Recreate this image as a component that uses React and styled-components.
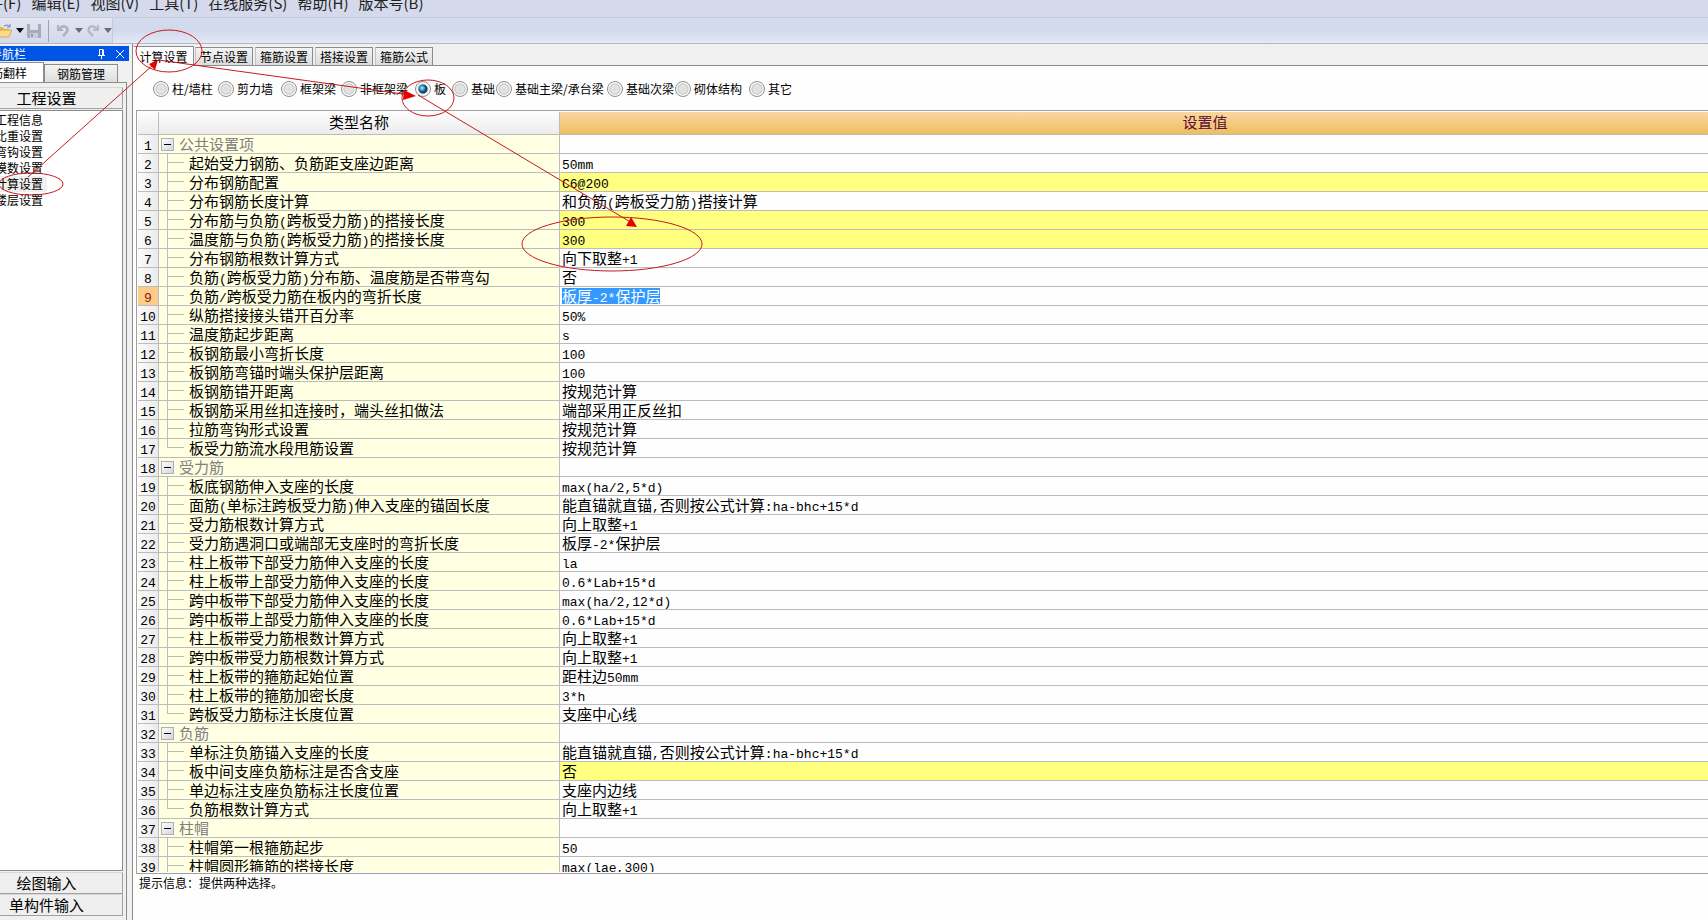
import React, { useState } from "react";
import styled, { createGlobalStyle } from "styled-components";

const GlobalStyle = createGlobalStyle`
* {
  box-sizing: border-box;
}
body {
  margin: 0;
  overflow: hidden;
  background: #fefefe;
  color: #000;
  font-family: 'Noto Sans CJK SC', sans-serif;
  font-size: 12px;
}
button, input {
  margin: 0;
  padding: 0;
  border: none;
  background: none;
  color: inherit;
  font: inherit;
}
`

/* the window hangs over the top left corner of the screen */
const Window = styled.div`
display: flex;
flex-direction: column;
height: calc(100vh + 8px);
margin: -8px 0 0 -36px;
white-space: nowrap;
`

const MenuBar = styled.nav`
display: flex;
align-items: center;
gap: 10px;
height: 26px;
padding: 0 0 4px 9px;
border-bottom: 1px solid #c9ccd6;
background: #d4d9eb;
`
const MenuItem = styled.button`
font-size: 15px;
line-height: 20px;
color: #222;
`

const ToolBar = styled.div`
height: 26px;
flex: none;
border-bottom: 1px solid #adb9c8;
background: linear-gradient(#d3dbf0, #d1daec 50%, #e4e8f6);
`
const ToolGroup = styled.div`
display: flex;
align-items: center;
width: 149px;
height: 25px;
padding-left: 34px;
border-right: 1px solid #c4cbdc;
background: linear-gradient(#e3e6f3, #d3d9e9);
`
const ToolButton = styled.button`
display: flex;
width: ${props => props.$width}px;
`
const Divider = styled.span`
width: 1px;
height: 22px;
margin: 0 7px;
background: #9aa3b8;
`

const Body = styled.div`
display: flex;
flex: 1;
min-height: 0;
background: #f0f0f0;
`

const SideBar = styled.aside`
display: flex;
flex-direction: column;
width: 165px;
padding-top: 2px;
`
const Caption = styled.div`
display: flex;
align-items: center;
gap: 10px;
height: 15px;
padding: 0 5px 0 2px;
background: #0054e3;
color: #fff;
line-height: 15px;
`
const CaptionText = styled.span`
flex: 1;
`
const SideTabs = styled.div`
display: flex;
align-items: flex-end;
height: 21px;
`
const SideTab = styled.button`
width: ${props => props.$active ? 80 : 74}px;
height: ${props => props.$active ? 20 : 18}px;
padding-right: ${props => props.$active ? 2 : 0}px;
border: 1px solid #8c8c8c;
border-bottom: none;
background: ${props => props.$active ? '#fff' : 'linear-gradient(#f4f4f4, #dedede)'};
line-height: 17px;
`
const SidePanel = styled.div`
display: flex;
flex-direction: column;
flex: 1;
width: 163px;
padding: 4px 3px 4px 5px;
border: 1px solid #8c8c8c;
border-bottom: none;
background: #f0f0f0;
`
const PanelHeader = styled.button`
height: 22px;
flex: none;
border: 1px solid #a0a0a0;
border-top-color: #d8d8d8;
background: #efefef;
font-size: 15px;
line-height: 20px;
`
const NavList = styled.div`
display: flex;
flex-direction: column;
align-items: flex-start;
flex: 1;
margin: 1px 0;
padding: 1px 0 0 20px;
border: 1px solid #8c8c8c;
background: #fff;
`
const NavItem = styled.button`
height: 16px;
padding: 0 4px;
border-radius: 2px;
background: ${props => props.$active ? '#efefef' : 'none'};
line-height: 16px;
`

const Main = styled.main`
display: flex;
flex-direction: column;
flex: 1;
min-width: 0;
margin-left: 3px;
border-left: 1px solid #8c8c8c;
background: #fefefe;
`
const Tabs = styled.div`
display: flex;
align-items: flex-end;
height: 22px;
flex: none;
border-bottom: 1px solid #8b8b93;
background: #f0f0f0;
`
const Tab = styled.button`
width: ${props => props.$active ? 61 : 58}px;
height: ${props => props.$active ? 20 : 18}px;
margin-right: ${props => props.$active ? 1 : 2}px;
margin-bottom: ${props => props.$active ? -1 : 0}px;
border: 1px solid #8b8b93;
border-bottom: none;
border-left-color: ${props => props.$active ? '#fefefe' : '#c4c4c8'};
background: ${props => props.$active ? '#fefefe' : 'linear-gradient(#f4f4f4, #dcdcdc)'};
line-height: 16px;
`

const Types = styled.div`
display: grid;
grid-template-columns: 65px 63px 60px 74px 37px 44px 111px 68px 74px auto;
align-items: center;
height: 44px;
flex: none;
padding: 1px 0 0 20px;
`
const TypeLabel = styled.label`
display: flex;
align-items: center;
gap: 3px;
line-height: 16px;
`
const Radio = styled.input`
appearance: none;
width: 16px;
height: 16px;
border: 1px solid #8e8f8f;
border-radius: 50%;
background: radial-gradient(circle, #dcdcdc 0, #e6e6e6 4px, #c4c4c4 5px, #f8f8f8 6px);

&:checked {
  background: radial-gradient(circle at 6px 6px, #c4f1ff 0, #3fa4d4 2px, transparent 4px), radial-gradient(circle, #145a88 2px, #0b3658 4px, #dfe3e6 5px, #f8f8f8 6px);
}
`

const GridFrame = styled.div`
flex: 1;
min-height: 0;
margin-left: 3px;
padding: 1px 0 1px 1px;
border: 1px solid #a0a0a0;
border-right: none;
`
const GridClip = styled.div`
height: 100%;
overflow: hidden;
`
/* the value column is wider than its view */
const Grid = styled.table`
width: calc(100% + 143px);
table-layout: fixed;
border-collapse: separate;
border-spacing: 0;
font-size: 15px;
line-height: 18px;
`
const HeadCell = styled.th`
width: ${props => props.$width};
height: 23px;
padding: 0 0 2px;
border-right: 1px solid #bcbcbc;
border-bottom: 1px solid #bcbcbc;
background: ${props => props.$active ? 'linear-gradient(#f8d7a0, #f0be60)' : 'linear-gradient(#fdfdfd, #ececec)'};
color: ${props => props.$active ? '#5c0f3c' : '#000'};
font-weight: 400;
`
const NumberCell = styled.th`
height: 19px;
padding: 0;
border-right: 1px solid #bcbcbc;
border-bottom: 1px solid #bcbcbc;
background: ${props => props.$active ? '#ffcc88' : 'linear-gradient(90deg, #fbfbfb, #ebebeb)'};
color: ${props => props.$active ? '#8b1a1a' : '#000'};
font-weight: 400;
`
const NameCell = styled.td`
height: 19px;
padding: 0;
border-right: 1px solid #bcbcbc;
border-bottom: 1px solid #bcbcbc;
background: #ffffe1;
`
const ValueCell = styled.td`
height: 19px;
padding: 0 0 0 2px;
border-bottom: 1px solid #bcbcbc;
background: ${props => props.$changed ? '#ffff80' : '#fefefe'};
`
const CellRow = styled.div`
display: flex;
align-items: center;
justify-content: ${props => props.$center ? 'center' : 'flex-start'};
height: 18px;
color: ${props => props.$group ? '#808080' : 'inherit'};
`
const Toggle = styled.button`
display: flex;
align-items: center;
justify-content: center;
width: 13px;
height: 13px;
margin: 0 5px 0 2px;
border: 1px solid #a9b0bb;
background: linear-gradient(135deg, #fff, #d4d4dc);
`
const Branch = styled.span`
display: grid;
grid-template-rows: 9px 9px;
width: 17px;
height: 18px;
margin: 0 5px 0 8px;

&::before {
  content: '';
  border-left: 1px solid #bcbcbc;
  border-bottom: 1px solid #bcbcbc;
}
&::after {
  content: '';
  border-left: 1px solid ${props => props.$last ? 'transparent' : '#bcbcbc'};
}
`
const Selection = styled.span`
height: 16px;
background: #3399ff;
color: #fff;
line-height: 16px;
`
/* half-width characters sit in an 8px cell beside the 15px Chinese ones */
const Latin = styled.span`
font-family: 'Liberation Mono', monospace;
font-size: 13px;
line-height: 12px;
`

const Hint = styled.footer`
height: 46px;
flex: none;
padding: 1px 0 0 6px;
line-height: 16px;
`

const Marks = styled.svg`
position: absolute;
top: 0;
left: 0;
pointer-events: none;
`

const menus = ['文件(F)', '编辑(E)', '视图(V)', '工具(T)', '在线服务(S)', '帮助(H)', '版本号(B)']

const navItems = ['工程信息', '比重设置', '弯钩设置', '模数设置', '计算设置', '楼层设置']

const tabs = ['计算设置', '节点设置', '箍筋设置', '搭接设置', '箍筋公式']

const types = ['柱/墙柱', '剪力墙', '框架梁', '非框架梁', '板', '基础', '基础主梁/承台梁', '基础次梁', '砌体结构', '其它']

const settings = [
    { group: '公共设置项' },
    { name: '起始受力钢筋、负筋距支座边距离', value: '50mm' },
    { name: '分布钢筋配置', value: 'C6@200', changed: true },
    { name: '分布钢筋长度计算', value: '和负筋(跨板受力筋)搭接计算' },
    { name: '分布筋与负筋(跨板受力筋)的搭接长度', value: '300', changed: true },
    { name: '温度筋与负筋(跨板受力筋)的搭接长度', value: '300', changed: true },
    { name: '分布钢筋根数计算方式', value: '向下取整+1' },
    { name: '负筋(跨板受力筋)分布筋、温度筋是否带弯勾', value: '否' },
    { name: '负筋/跨板受力筋在板内的弯折长度', value: '板厚-2*保护层', selected: true },
    { name: '纵筋搭接接头错开百分率', value: '50%' },
    { name: '温度筋起步距离', value: 's' },
    { name: '板钢筋最小弯折长度', value: '100' },
    { name: '板钢筋弯锚时端头保护层距离', value: '100' },
    { name: '板钢筋错开距离', value: '按规范计算' },
    { name: '板钢筋采用丝扣连接时，端头丝扣做法', value: '端部采用正反丝扣' },
    { name: '拉筋弯钩形式设置', value: '按规范计算' },
    { name: '板受力筋流水段甩筋设置', value: '按规范计算' },
    { group: '受力筋' },
    { name: '板底钢筋伸入支座的长度', value: 'max(ha/2,5*d)' },
    { name: '面筋(单标注跨板受力筋)伸入支座的锚固长度', value: '能直锚就直锚,否则按公式计算:ha-bhc+15*d' },
    { name: '受力筋根数计算方式', value: '向上取整+1' },
    { name: '受力筋遇洞口或端部无支座时的弯折长度', value: '板厚-2*保护层' },
    { name: '柱上板带下部受力筋伸入支座的长度', value: 'la' },
    { name: '柱上板带上部受力筋伸入支座的长度', value: '0.6*Lab+15*d' },
    { name: '跨中板带下部受力筋伸入支座的长度', value: 'max(ha/2,12*d)' },
    { name: '跨中板带上部受力筋伸入支座的长度', value: '0.6*Lab+15*d' },
    { name: '柱上板带受力筋根数计算方式', value: '向上取整+1' },
    { name: '跨中板带受力筋根数计算方式', value: '向上取整+1' },
    { name: '柱上板带的箍筋起始位置', value: '距柱边50mm' },
    { name: '柱上板带的箍筋加密长度', value: '3*h' },
    { name: '跨板受力筋标注长度位置', value: '支座中心线' },
    { group: '负筋' },
    { name: '单标注负筋锚入支座的长度', value: '能直锚就直锚,否则按公式计算:ha-bhc+15*d' },
    { name: '板中间支座负筋标注是否含支座', value: '否', changed: true },
    { name: '单边标注支座负筋标注长度位置', value: '支座内边线' },
    { name: '负筋根数计算方式', value: '向上取整+1' },
    { group: '柱帽' },
    { name: '柱帽第一根箍筋起步', value: '50' },
    { name: '柱帽圆形箍筋的搭接长度', value: 'max(lae,300)' },
]

const Mixed = ({ text = '' }) => text.split(/([!-~]+)/).map((part, i) => (
    i % 2 ? <Latin key={i}>{part}</Latin> : part
))

const DropArrow = ({ color }) => (
    <svg width="8" height="5" viewBox="0 0 8 5"><path d="M0 0h8L4 5z" fill={color}/></svg>
)

const Tools = () => (
    <ToolGroup>
        <ToolButton $width={18} aria-label="打开">
            <svg width="14" height="14" viewBox="0 0 14 14">
                <path d="M0 3h5l1 2h5v8H0z" fill="#e9b84e"/>
                <path d="M2 6h12l-3 7H0z" fill="#fbdc86" stroke="#c8962f" strokeWidth=".7"/>
                <path d="M6 2q3-2 5 0M12 0v3H9" fill="none" stroke="#5b86c4"/>
            </svg>
        </ToolButton>
        <ToolButton $width={11} aria-label="打开选项"><DropArrow color="#111"/></ToolButton>
        <ToolButton $width={14} aria-label="保存">
            <svg width="14" height="14" viewBox="0 0 14 14">
                <path d="M0 0h14v14H1l-1-1z" fill="#a4abbb"/>
                <path d="M3 0h8v6H3z" fill="#dde1ec"/>
                <path d="M3 9h8v5H3z" fill="#c9cedb"/>
                <path d="M4 10h2v3H4z" fill="#8f97a9"/>
            </svg>
        </ToolButton>
        <Divider/>
        <ToolButton $width={19} aria-label="撤销">
            <svg width="14" height="14" viewBox="0 0 14 14" fill="none" stroke="#aab1c1">
                <path d="M2 1v5h5" strokeWidth="2"/>
                <path d="M3 5Q7 1 10 3t0 6l-3 3" strokeWidth="2.5"/>
            </svg>
        </ToolButton>
        <ToolButton $width={11} aria-label="撤销选项"><DropArrow color="#666c78"/></ToolButton>
        <ToolButton $width={18} aria-label="恢复">
            <svg width="14" height="14" viewBox="0 0 14 14" fill="none" stroke="#b4bac9">
                <path d="M12 1v5H7" strokeWidth="2"/>
                <path d="M11 5Q7 1 4 3t0 6l3 3" strokeWidth="2.5"/>
            </svg>
        </ToolButton>
        <ToolButton $width={8} aria-label="恢复选项"><DropArrow color="#666c78"/></ToolButton>
    </ToolGroup>
)

const Side = () => (
    <SideBar>
        <Caption>
            <CaptionText>模块导航栏</CaptionText>
            <svg width="9" height="10" viewBox="0 0 9 10" fill="none" stroke="#fff">
                <path d="M2.5 6V.5h3V6M6.5 .5V6M1 6.5h7M4.5 7v3"/>
            </svg>
            <svg width="8" height="8" viewBox="0 0 8 8" stroke="#fff"><path d="M0 0l8 8M8 0L0 8"/></svg>
        </Caption>
        <SideTabs>
            <SideTab $active>钢筋翻样</SideTab>
            <SideTab>钢筋管理</SideTab>
        </SideTabs>
        <SidePanel>
            <PanelHeader>工程设置</PanelHeader>
            <NavList>
                {navItems.map(item => (
                    <NavItem key={item} $active={item === '计算设置'}>{item}</NavItem>
                ))}
            </NavList>
            <PanelHeader>绘图输入</PanelHeader>
            <PanelHeader>单构件输入</PanelHeader>
        </SidePanel>
    </SideBar>
)

const SettingRow = ({ row, number, last }) => (
    <tr>
        <NumberCell scope="row" $active={row.selected}>
            <CellRow $center><span><Latin>{number}</Latin></span></CellRow>
        </NumberCell>
        <NameCell>
            <CellRow $group={row.group}>
                {row.group
                    ? <Toggle aria-label="折叠"><svg width="7" height="1"><path d="M0 0h7v1H0z"/></svg></Toggle>
                    : <Branch $last={last}/>}
                <span><Mixed text={row.group || row.name}/></span>
            </CellRow>
        </NameCell>
        <ValueCell $changed={row.changed}>
            <CellRow>
                {row.selected
                    ? <Selection><Mixed text={row.value}/></Selection>
                    : <span><Mixed text={row.value}/></span>}
            </CellRow>
        </ValueCell>
    </tr>
)

const Annotations = () => (
    <Marks width="720" height="290" fill="none" stroke="#c8191c">
        <ellipse cx="169" cy="51" rx="33" ry="21"/>
        <ellipse cx="31" cy="184" rx="32" ry="11"/>
        <ellipse cx="428" cy="98" rx="26" ry="18"/>
        <ellipse cx="612" cy="244" rx="90" ry="27"/>
        <path d="M28 177L154 64M158 60L410 95M418 95L632 223"/>
        <path d="M158 60l-9 4 6 6zM416 96l-12-6-1 10zM637 227l-6-10-5 9z" fill="#e60000" stroke="none"/>
    </Marks>
)

const App = () => {
    const [type, setType] = useState('板')

    return (
        <>
            <GlobalStyle/>
            <Window>
                <MenuBar>
                    {menus.map(menu => <MenuItem key={menu}>{menu}</MenuItem>)}
                </MenuBar>
                <ToolBar><Tools/></ToolBar>
                <Body>
                    <Side/>
                    <Main>
                        <Tabs>
                            {tabs.map((tab, i) => <Tab key={tab} $active={i === 0}>{tab}</Tab>)}
                        </Tabs>
                        <Types>
                            {types.map(item => (
                                <TypeLabel key={item}>
                                    <Radio type="radio" name="type" checked={type === item} onChange={() => setType(item)}/>
                                    {item}
                                </TypeLabel>
                            ))}
                        </Types>
                        <GridFrame>
                            <GridClip>
                                <Grid>
                                    <thead>
                                        <tr>
                                            <HeadCell $width="21px"/>
                                            <HeadCell $width="401px">类型名称</HeadCell>
                                            <HeadCell $active>设置值</HeadCell>
                                        </tr>
                                    </thead>
                                    <tbody>
                                        {settings.map((row, i) => (
                                            <SettingRow
                                                key={i}
                                                row={row}
                                                number={i + 1}
                                                last={Boolean(settings[i + 1] && settings[i + 1].group)}
                                            />
                                        ))}
                                    </tbody>
                                </Grid>
                            </GridClip>
                        </GridFrame>
                        <Hint>提示信息：提供两种选择。</Hint>
                    </Main>
                </Body>
            </Window>
            <Annotations/>
        </>
    )
}

export default App
